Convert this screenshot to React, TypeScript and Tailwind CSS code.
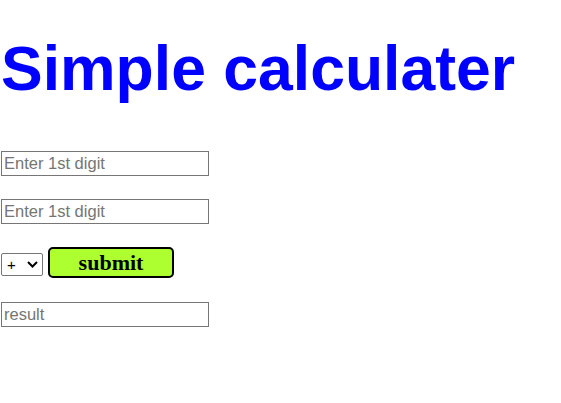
import React from "react";

export default function App() {
	return (
		<div className="min-h-[403px] bg-white pl-px font-['Liberation_Sans',Arial,sans-serif]">
			<h1 className="pt-[32px] text-[62.5px] leading-[72px] font-bold text-[#0000ff]">
				Simple calculater
			</h1>

			<div className="flex flex-col items-start">
				<input
					type="text"
					placeholder="Enter 1st digit"
					className="mt-[47px] w-[208px] h-[25px] border border-[#767676] px-[2px] text-[16.5px] placeholder:text-[#757575]"
				/>
				<input
					type="text"
					placeholder="Enter 1st digit"
					className="mt-[23px] w-[208px] h-[25px] border border-[#767676] px-[2px] text-[16.5px] placeholder:text-[#757575]"
				/>

				<div className="mt-[23px] flex items-start gap-[5px]">
					<div className="relative mt-[6px]">
						<select className="appearance-none w-[42px] h-[23px] border border-[#767676] rounded-[2px] pl-[5px] text-[15px] text-black bg-white">
							<option>+</option>
							<option>-</option>
							<option>*</option>
							<option>/</option>
						</select>
						<svg
							className="pointer-events-none absolute left-[26px] top-[8px]"
							width="11"
							height="7"
							viewBox="0 0 11 7"
						>
							<path d="M1 1l4.5 4.5L10 1" fill="none" stroke="#000" strokeWidth="2" />
						</svg>
					</div>
					<button
						type="button"
						className="w-[126px] h-[31px] border-2 border-black rounded-[5px] bg-[#adff2f] font-['Liberation_Serif','Times_New_Roman',serif] font-bold text-[22px] leading-none text-black"
					>
						submit
					</button>
				</div>

				<input
					type="text"
					placeholder="result"
					className="mt-[24px] w-[208px] h-[25px] border border-[#767676] px-[2px] text-[16.5px] placeholder:text-[#757575]"
				/>
			</div>
		</div>
	);
}
